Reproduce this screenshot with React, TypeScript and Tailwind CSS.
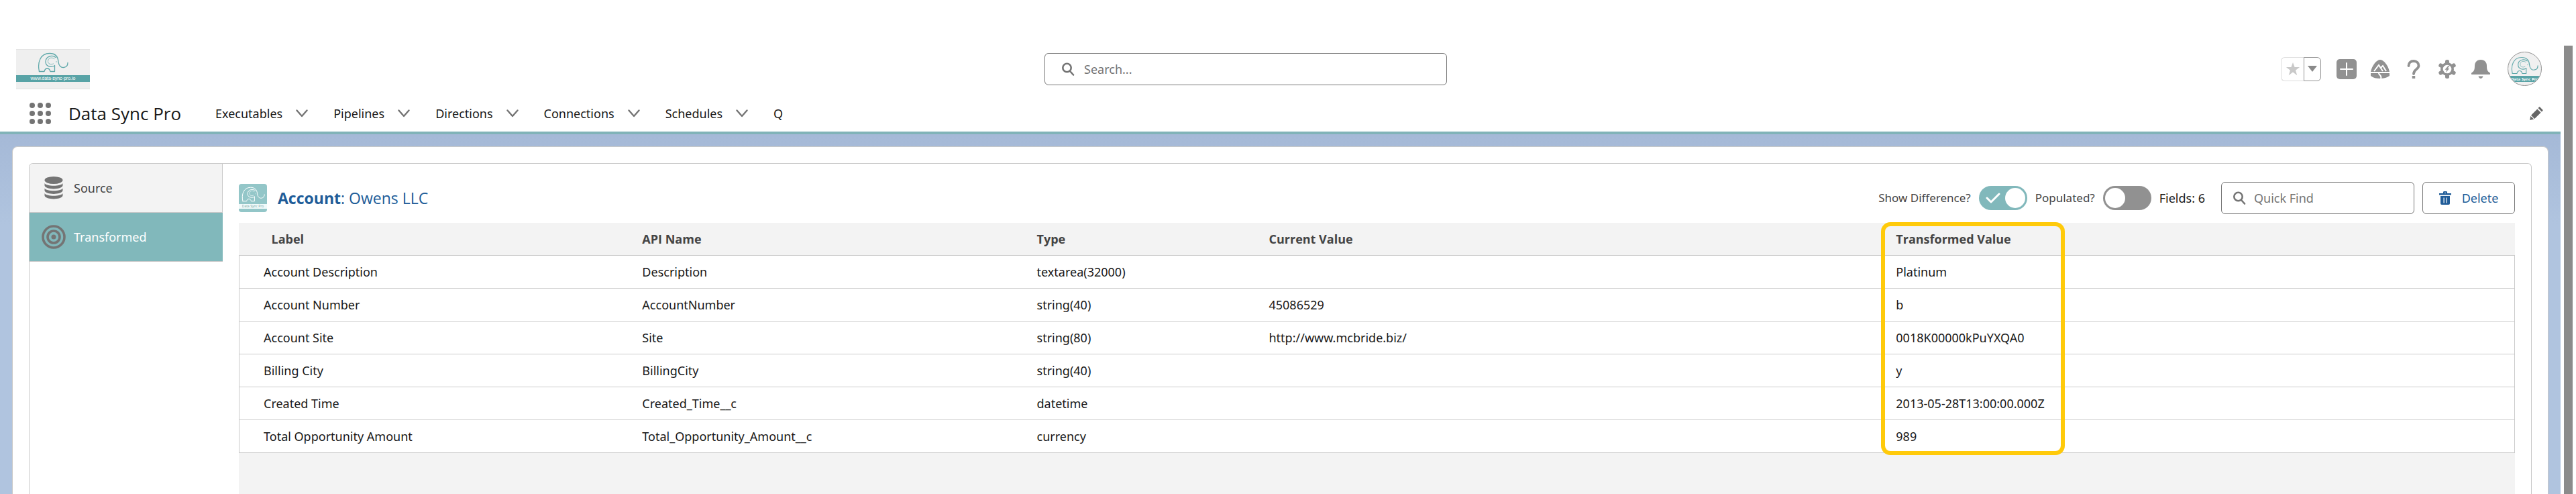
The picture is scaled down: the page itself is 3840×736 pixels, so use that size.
import { ReactNode } from "react";

function Elephant({ className }: { className: string }) {
  return (
    <svg viewBox="0 0 92 60" className={className} fill="none" stroke="currentColor" strokeWidth="2.6" strokeLinecap="round" strokeLinejoin="round" aria-hidden="true">
      <path d="M5 57C-1 30 8 3 36 3c18 0 25 12 26 25 1 12 8 18 16 17 8-1 12-7 12-14" />
      <path d="M5 57h15c3-12 15-12 18 0h13V39" />
      <path d="M54 15C44 7 24 11 24 28c0 13 14 18 27 12" />
      <path d="M50 19c-9-6-19-2-19 8 0 7 8 11 16 7" strokeWidth="1.6" />
      <circle cx="56" cy="28" r="1.4" fill="currentColor" stroke="none" />
    </svg>
  );
}

function Chevron() {
  return (
    <svg viewBox="0 0 18 12" className="h-3 w-[18px]" fill="none" stroke="#747474" strokeWidth="2.4" strokeLinecap="round" strokeLinejoin="round" aria-hidden="true">
      <path d="M1.5 1.5 9 10l7.5-8.5" />
    </svg>
  );
}

function Magnifier() {
  return (
    <svg viewBox="0 0 20 20" className="size-5 shrink-0" fill="none" stroke="#747474" strokeWidth="2.6" strokeLinecap="round" aria-hidden="true">
      <circle cx="8.5" cy="8" r="6.2" />
      <path d="m13 13 5 5.500" />
    </svg>
  );
}

function IconButton({ label, children }: { label: string; children: ReactNode }) {
  return (
    <button type="button" aria-label={label} className="flex size-8 items-center justify-center text-[#919191]">
      {children}
    </button>
  );
}

function Toggle({ label, on }: { label: string; on?: boolean }) {
  return (
    <label className="flex items-center gap-3 text-[17px] leading-6 text-[#444444]">
      {label}
      <span className="relative flex">
        <input type="checkbox" role="switch" defaultChecked={on} className="peer h-9 w-[72px] appearance-none rounded-full bg-[#919191] checked:bg-[#81b8bb]" />
        <span className="pointer-events-none absolute top-[3px] left-[3px] size-[30px] rounded-full bg-white peer-checked:left-[39px]" />
        <svg viewBox="0 0 22 16" className="pointer-events-none absolute top-[10px] left-[10px] hidden h-4 w-[22px] peer-checked:block" fill="none" stroke="#ffffff" strokeWidth="3" strokeLinecap="round" strokeLinejoin="round" aria-hidden="true">
          <path d="m2 8 6 6L20 2" />
        </svg>
      </span>
    </label>
  );
}

const tabs = ["Executables", "Pipelines", "Directions", "Connections", "Schedules"];

const cols = ["Label", "API Name", "Type", "Current Value", "Transformed Value"];

const rows = [
  ["Account Description", "Description", "textarea(32000)", "", "Platinum"],
  ["Account Number", "AccountNumber", "string(40)", "45086529", "b"],
  ["Account Site", "Site", "string(80)", "http://www.mcbride.biz/", "0018K00000kPuYXQA0"],
  ["Billing City", "BillingCity", "string(40)", "", "y"],
  ["Created Time", "Created_Time__c", "datetime", "", "2013-05-28T13:00:00.000Z"],
  ["Total Opportunity Amount", "Total_Opportunity_Amount__c", "currency", "", "989"],
];

function GlobalHeader() {
  return (
    <header className="grid h-[69px] grid-cols-[31fr_600px_33fr] items-center pr-7 pl-6">
      <a href="#home" aria-label="Home" className="flex h-[60px] w-[110px] flex-col border-y border-[#e2e2e2] bg-[#efefef]">
        <span className="flex h-[38px] items-center justify-center">
          <Elephant className="h-[30px] w-[46px] text-[#5fa8aa]" />
        </span>
        <span className="flex h-[10px] items-center justify-center bg-[#58a3a6] font-['Liberation_Sans',sans-serif] text-[7px] leading-none text-white">www.data-sync-pro.io</span>
      </a>
      <label className="flex h-12 items-center gap-[14px] rounded-md border border-[#747474] px-6">
        <Magnifier />
        <input type="search" aria-label="Search" placeholder="Search..." className="min-w-0 flex-1 text-lg leading-6 outline-none placeholder:text-[#747474]" />
      </label>
      <div className="flex items-center justify-end">
        <div className="mr-[22px] flex h-9">
          <button type="button" aria-label="Favorite" className="flex w-[34px] items-center justify-center rounded-l-md border border-r-0 border-[#dddddd] text-[#c9c9c9]">
            <svg viewBox="0 0 24 24" className="size-[22px]" fill="currentColor" aria-hidden="true">
              <path d="m12 1 2.800 7.800H23l-6.600 5 2.400 8.200L12 17l-6.800 5 2.400-8.200L1 8.800h8.200z" />
            </svg>
          </button>
          <button type="button" aria-label="Favorites list" className="flex w-[26px] items-center justify-center rounded-r-md border border-[#919191] text-[#8a8a8a]">
            <svg viewBox="0 0 14 9" className="h-[9px] w-[14px]" fill="currentColor" aria-hidden="true">
              <path d="M0 0h14L7 9z" />
            </svg>
          </button>
        </div>
        <div className="flex items-center gap-[18px]">
          <IconButton label="Create">
            <svg viewBox="0 0 30 30" className="size-[30px]" aria-hidden="true">
              <rect width="30" height="30" rx="5" fill="currentColor" />
              <path d="M15 6v18M6 15h18" stroke="#fff" strokeWidth="2" strokeLinecap="round" />
            </svg>
          </IconButton>
          <IconButton label="Guidance">
            <svg viewBox="0 0 28 28" className="size-7" aria-hidden="true">
              <path d="M0 18C2 8 9 0 14 0s12 8 14 18z" fill="currentColor" />
              <path d="M0 20h28v4c-4 3-8 4-14 4S4 27 0 24z" fill="currentColor" />
              <path d="m5 17 7-9 6 9M15 12l3-3 5 8" fill="none" stroke="#fff" strokeWidth="2" />
              <path d="M12 20c0 3 5 3 3 8" fill="none" stroke="#fff" strokeWidth="2" />
            </svg>
          </IconButton>
          <IconButton label="Help">
            <svg viewBox="0 0 20 28" className="h-7 w-5" fill="none" stroke="currentColor" strokeWidth="3.800" aria-hidden="true">
              <path d="M2.500 9C2.500 4.500 5.500 2 10 2s7.500 3 7.500 7c0 5-7.500 5.500-7.500 12" strokeLinecap="round" />
              <path d="M10 24v4" strokeWidth="4.500" />
            </svg>
          </IconButton>
          <IconButton label="Setup">
            <svg viewBox="0 0 28 28" className="size-7" aria-hidden="true">
              <g fill="currentColor">
                <circle cx="14" cy="14" r="10" />
                {[0, 60, 120, 180, 240, 300].map((a) => (
                  <rect key={a} x="11" y="0" width="6" height="7" rx="2.500" transform={"rotate(" + a + " 14 14)"} />
                ))}
              </g>
              <circle cx="14" cy="14" r="6.300" fill="#fff" />
              <path d="m15.500 9-5 5.800h2.700L12 19l5.300-6h-2.800L17.500 9z" fill="currentColor" />
            </svg>
          </IconButton>
          <IconButton label="Notifications">
            <svg viewBox="0 0 28 28" className="size-7" fill="currentColor" aria-hidden="true">
              <path d="M14 0c6 0 9 4 9 9 0 6 1 8 4 10 2 1.500 1 3 0 3H1c-1 0-2-1.500 0-3 3-2 4-4 4-10 0-5 3-9 9-9z" />
              <path d="M10.500 24.500h7c-.5 2-2 3.500-3.500 3.500s-3-1.500-3.500-3.500z" />
            </svg>
          </IconButton>
        </div>
        <button type="button" aria-label="View profile" className="ml-6 flex size-[51px] flex-col items-center overflow-hidden rounded-full border border-[#919191] bg-[#f0f0f0]">
          <span className="flex h-[35px] items-center pt-1">
            <Elephant className="h-[27px] w-[41px] text-[#5fa8aa]" />
          </span>
          <span className="flex h-[9px] w-full shrink-0 items-center justify-center bg-[#58a3a6] text-[6px] leading-none font-bold whitespace-nowrap text-white">Data Sync Pro</span>
        </button>
      </div>
    </header>
  );
}

function NavBar() {
  return (
    <nav className="flex h-[63px] items-center border-b-4 border-[#81b3b8] pt-[5px] pr-[26px] pl-11 text-[#181818]">
      <button type="button" aria-label="App launcher" className="flex">
        <svg viewBox="0 0 32 32" className="size-8" fill="#747474" aria-hidden="true">
          {[4, 16, 28].map((y) => [4, 16, 28].map((x) => <circle key={x + "-" + y} cx={x} cy={y} r="4" />))}
        </svg>
      </button>
      <span className="ml-[26px] w-[219px] font-['Open_Sans',sans-serif] text-[26px] leading-8">Data Sync Pro</span>
      <ul className="flex items-center gap-[38px] text-lg leading-6">
        {tabs.map((tab) => (
          <li key={tab} className="flex items-center gap-5">
            <a href={"#" + tab.toLowerCase()}>{tab}</a>
            <button type="button" aria-label={tab + " list"} className="flex">
              <Chevron />
            </button>
          </li>
        ))}
        <li>
          <a href="#q">Q</a>
        </li>
      </ul>
      <button type="button" aria-label="Edit navigation" className="ml-auto flex text-[#666666]">
        <svg viewBox="0 0 20 20" className="size-5" fill="currentColor" aria-hidden="true">
          <path d="m15.500.8 3.700 3.700c.6.600.6 1.200 0 1.700L17.900 7.500 12.500 2.100 13.800.8c.5-.6 1.200-.6 1.700 0zM11.300 3.400l5.300 5.300-9.400 9.200L2 12.700zM1.200 13.900 6.200 18.600.2 20z" />
        </svg>
      </button>
    </nav>
  );
}

function FieldTable() {
  return (
    <div className="relative flex-1 bg-[#f3f3f3]">
      <table className="w-full table-fixed border-collapse text-left text-lg leading-6">
        <colgroup>
          <col className="w-[17.36%]" />
          <col className="w-[17.34%]" />
          <col className="w-[10.2%]" />
          <col className="w-[27.56%]" />
          <col />
        </colgroup>
        <thead className="font-['Open_Sans',sans-serif] text-[#444444]">
          <tr className="h-12">
            {cols.map((col) => (
              <th key={col} className="px-3 font-bold first:pl-12">{col}</th>
            ))}
          </tr>
        </thead>
        <tbody className="border border-[#c9c9c9] bg-white text-[#181818]">
          {rows.map((row) => (
            <tr key={row[0]} className="h-[49px] border-t border-[#c9c9c9]">
              {row.map((cell, i) => (
                <td key={i} className="px-3 first:pl-9">{cell}</td>
              ))}
            </tr>
          ))}
        </tbody>
      </table>
      <div className="pointer-events-none absolute top-[-1px] left-[72.16%] h-[347px] w-[274px] rounded-[14px] border-[6px] border-[#ffca0a]" />
    </div>
  );
}

export default function App() {
  return (
    <div className="flex min-h-screen bg-white pt-[68px] font-['Noto_Sans',sans-serif]">
      <div className="flex min-w-0 flex-1 flex-col">
        <GlobalHeader />
        <NavBar />
        <main className="flex flex-1 flex-col bg-linear-to-b from-[#a5b9d7] to-[#b0c4df] to-25% px-[18px] pt-[18px]">
          <div className="flex flex-1 flex-col rounded-t-lg border border-b-0 border-[#c9c9c9] bg-white px-6 pt-6">
            <div className="flex flex-1 rounded-t-md border border-b-0 border-[#c9c9c9]">
              <aside className="w-[288px] text-lg leading-6">
                <button type="button" className="flex h-[73px] w-full items-center gap-3 rounded-tl-md border-r border-b border-[#c9c9c9] bg-[#f3f3f3] pl-[18px] text-[#444444]">
                  <svg viewBox="0 0 36 36" className="size-9" fill="#747474" aria-hidden="true">
                    <ellipse cx="18" cy="6.500" rx="13.500" ry="5.500" />
                    <path d="M4.500 11c3 5 24 5 27 0v3.500c-2 6.500-25 6.500-27 0zM4.500 18.500c3 5 24 5 27 0V22c-2 6.500-25 6.500-27 0zM4.500 26c3 5 24 5 27 0v3.500c-2 6.500-25 6.500-27 0z" />
                  </svg>
                  Source
                </button>
                <button type="button" className="flex h-[73px] w-full items-center gap-3 border-b border-[#c9c9c9] bg-[#81b8bb] pl-[18px] text-white">
                  <svg viewBox="0 0 36 36" className="size-9" fill="none" stroke="#747474" strokeWidth="3.600" aria-hidden="true">
                    <circle cx="18" cy="18" r="16" />
                    <circle cx="18" cy="18" r="9" />
                    <circle cx="18" cy="18" r="3.500" fill="#747474" stroke="none" />
                  </svg>
                  Transformed
                </button>
              </aside>
              <section className="flex min-w-0 flex-1 flex-col px-6">
                <div className="flex h-[88px] items-center pt-[14px]">
                  <span className="flex size-[42px] flex-col overflow-hidden rounded-sm bg-[#93c6c8]">
                    <span className="flex h-[30px] items-center justify-center">
                      <Elephant className="h-[23px] w-[35px] text-white" />
                    </span>
                    <span className="flex h-[7px] items-center justify-center bg-[#f0fafa] text-[5px] leading-none whitespace-nowrap text-[#7ba9ab]">Data Sync Pro</span>
                  </span>
                  <h1 className="ml-4 font-['Open_Sans',sans-serif] text-[23px] leading-8 text-[#205c98]">
                    <a href="#account"><b>Account</b>: Owens LLC</a>
                  </h1>
                  <div className="ml-auto flex items-center gap-3">
                    <Toggle label="Show Difference?" on />
                    <Toggle label="Populated?" />
                    <span className="text-lg leading-6 text-[#181818]">Fields: 6</span>
                    <label className="ml-3 flex h-12 w-[288px] items-center gap-3 rounded-md border border-[#747474] px-4">
                      <Magnifier />
                      <input type="search" aria-label="Quick Find" placeholder="Quick Find" className="min-w-0 flex-1 text-lg leading-6 outline-none placeholder:text-[#747474]" />
                    </label>
                    <button type="button" className="flex h-12 w-[138px] items-center justify-center gap-4 rounded-md border border-[#747474] text-lg leading-6 text-[#205c98]">
                      <svg viewBox="0 0 18 20" className="h-5 w-[18px]" fill="currentColor" aria-hidden="true">
                        <path d="M6 3V1.500C6 .6 6.600 0 7.500 0h3c.9 0 1.500.6 1.500 1.500V3h6v2.500H0V3zm2 0h2V2H8z" />
                        <path d="M2 7h14v11c0 1.200-.8 2-2 2H4c-1.200 0-2-.8-2-2zm4.500 2.500v8h1.200v-8zm4 0v8h1.200v-8z" fillRule="evenodd" />
                      </svg>
                      Delete
                    </button>
                  </div>
                </div>
                <FieldTable />
              </section>
            </div>
          </div>
        </main>
      </div>
      <div className="w-[23px] bg-white pl-[5px]">
        <div className="h-full w-[13px] bg-[#8b8b8b]" />
      </div>
    </div>
  );
}
